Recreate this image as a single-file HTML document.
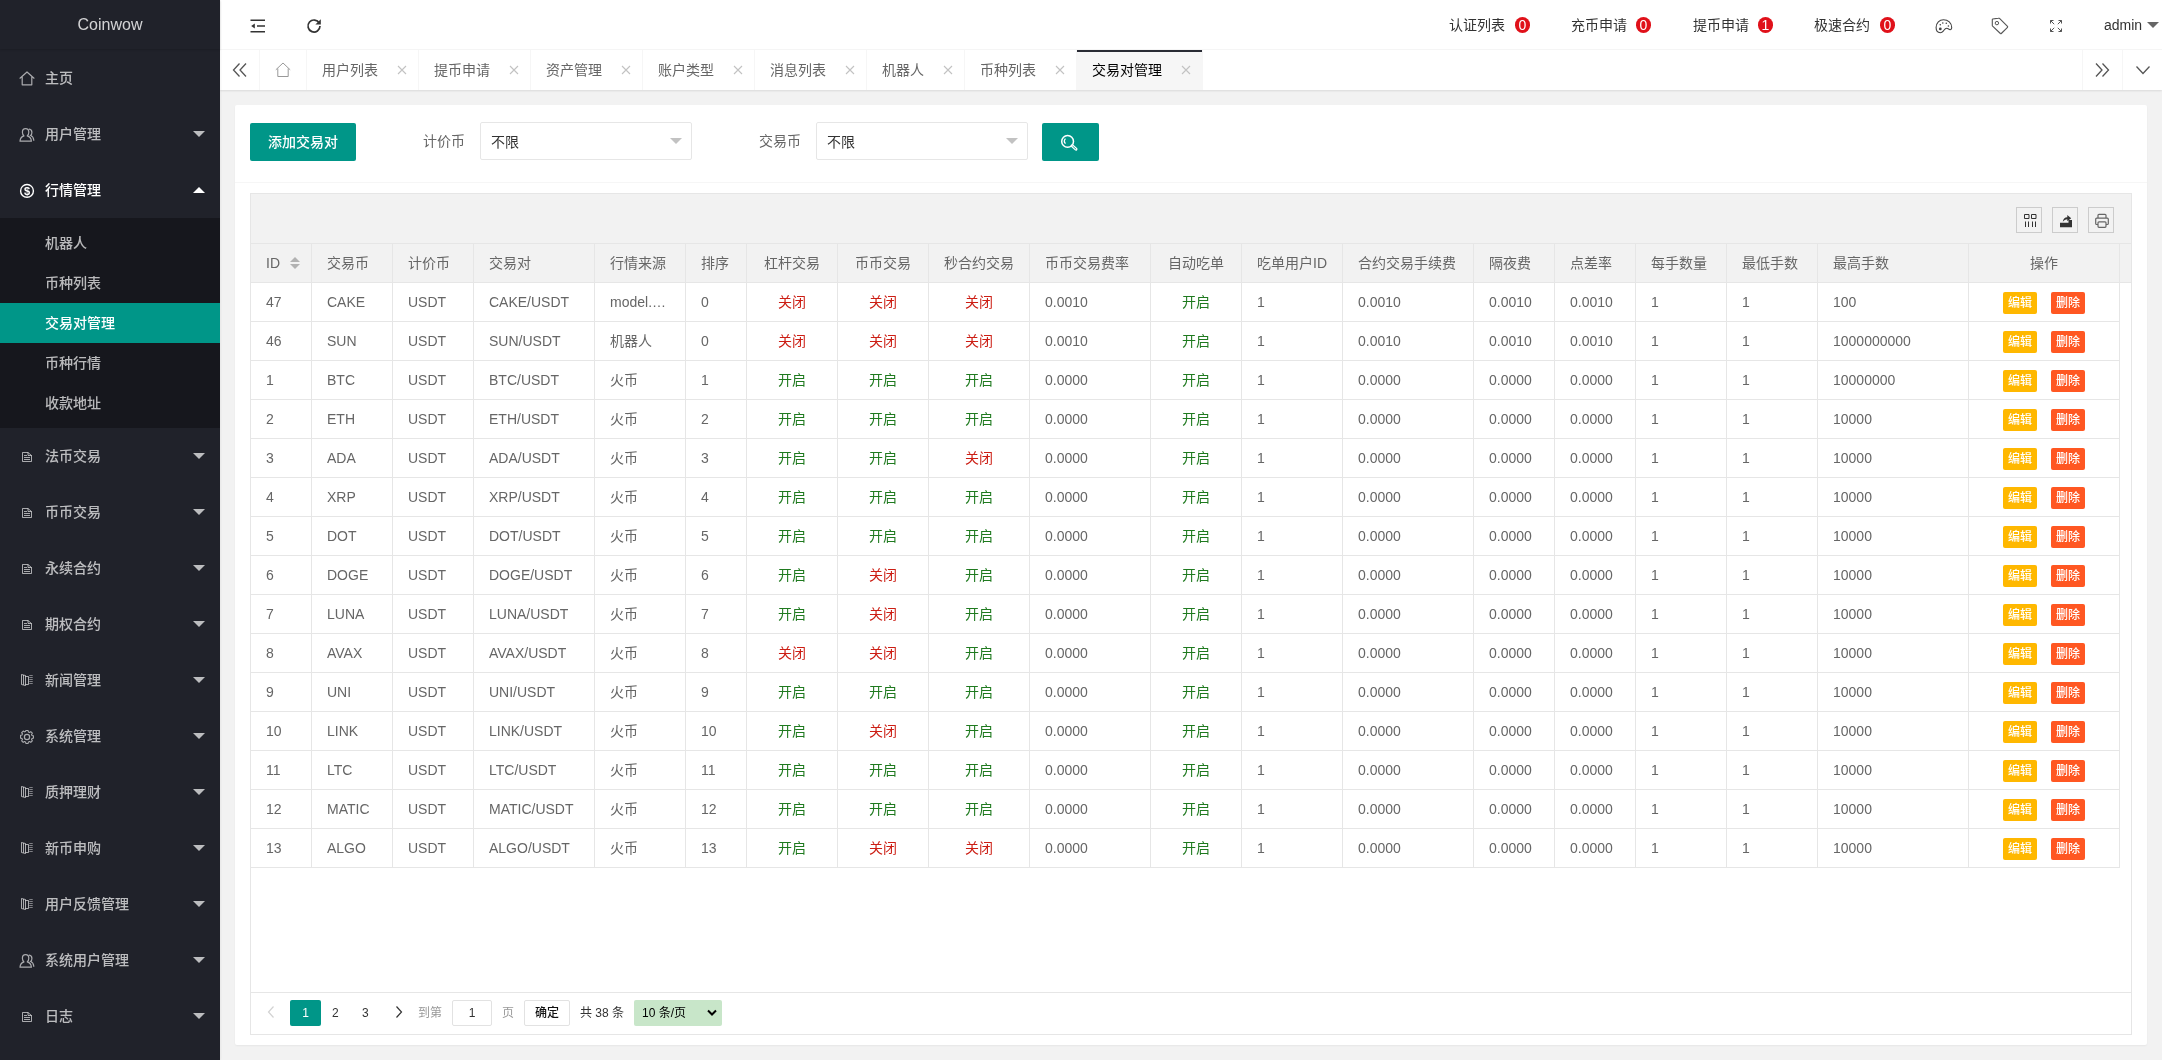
<!DOCTYPE html>
<html lang="zh-CN"><head><meta charset="utf-8"><title>Coinwow</title>
<style>
*{box-sizing:border-box;margin:0;padding:0}
html,body{width:2162px;height:1060px;overflow:hidden;background:#f2f2f2;
 font-family:"Liberation Sans", "Noto Sans CJK SC", sans-serif;font-size:14px;color:#666;line-height:24px}
a{text-decoration:none;color:inherit}
ul{list-style:none}
svg{display:block}
.abs{position:absolute}
/* sidebar */
#wrap{position:absolute;left:0;top:0;width:2162px;height:1060px;will-change:transform}
#side{position:absolute;left:0;top:0;width:220px;height:1060px;background:#20222A;z-index:5;box-shadow:1px 0 2px 0 rgba(0,0,0,.05)}
#logo{position:absolute;left:0;top:0;width:220px;height:49px;line-height:50px;text-align:center;color:rgba(255,255,255,.8);font-size:16px;box-shadow:0 1px 2px 0 rgba(0,0,0,.15)}
#nav{position:absolute;left:0;top:50px;width:220px}
#nav .it{position:relative;height:56px;line-height:56px;color:rgba(255,255,255,.7);padding-left:45px;font-size:14px;font-weight:500}
#nav .it.on{color:#fff}
#nav .it .ic{position:absolute;left:22px;top:24px;color:rgba(255,255,255,.62)}
#nav .it .more{position:absolute;right:15px;top:25px;width:0;height:0;border:6px solid transparent;border-top-color:rgba(255,255,255,.7)}
#nav .it.on .more{top:19px;border-top-color:transparent;border-bottom-color:#fff}
#nav .child{background:rgba(0,0,0,.3);padding:5px 0}
#nav .child div{height:40px;line-height:40px;padding-left:45px;color:rgba(255,255,255,.7);font-weight:500}
#nav .child div.this{background:#009688;color:#fff}
/* header */
#header{position:absolute;left:220px;top:0;width:1942px;height:50px;background:#fff;border-bottom:1px solid #f6f6f6;color:#333}
#header .t{position:absolute;top:0;height:50px;line-height:50px;color:#333;white-space:nowrap}
.badge{position:absolute;top:17px;width:15px;height:16px;border-radius:8px;background:#e0111a;color:#fff;font-size:14px;line-height:16px;text-align:center}
/* tabs */
#tabs{position:absolute;left:220px;top:50px;width:1942px;height:40px;background:#fff;box-shadow:0 1px 2px 0 rgba(0,0,0,.1)}
#tabs .tab{position:absolute;top:0;height:40px;line-height:40px;padding-left:15px;border-right:1px solid #f6f6f6;color:#666;white-space:nowrap}
#tabs .tab.this{background:#f6f6f6;color:#000}
#tabs .tab.this:after{content:"";position:absolute;left:0;top:0;width:100%;height:2px;background:#292B34}
#tabs .tab .x{position:absolute;right:10px;top:14px;width:12px;height:12px}
#tabs .ctl{position:absolute;top:0;width:40px;height:40px}
/* card */
#card{position:absolute;left:235px;top:105px;width:1912px;height:940px;background:#fff;border-radius:2px;box-shadow:0 1px 2px 0 rgba(0,0,0,.05)}
.btn{position:absolute;height:38px;line-height:38px;background:#009688;color:#fff;font-weight:500;border-radius:2px;text-align:center;font-size:14px;white-space:nowrap}
.lbl{position:absolute;height:38px;line-height:38px;color:#666;white-space:nowrap}
.sel{position:absolute;height:38px;border:1px solid #e6e6e6;border-radius:2px;background:#fff;line-height:38px;padding-left:10px;color:#333}
.sel:after{content:"";position:absolute;right:9px;top:15px;border:6px solid transparent;border-top-color:#c2c2c2}
/* table */
#tv{position:absolute;left:250px;top:193px;width:1882px;height:842px;border:1px solid #e6e6e6;background:#fff}
#tool{position:absolute;left:0;top:0;width:1880px;height:50px;background:#f2f2f2;border-bottom:1px solid #e6e6e6}
#tool .tb{position:absolute;top:13px;width:26px;height:26px;border:1px solid #ccc;background:transparent}
#thead{position:absolute;left:0;top:50px;width:1880px;height:39px;background:#f2f2f2;border-bottom:1px solid #e6e6e6}
.c{position:absolute;top:0;height:38px;line-height:38px;padding:0 15px;border-right:1px solid #e6e6e6;white-space:nowrap;overflow:hidden;color:#666}
.c.ctr{text-align:center}
.row{position:absolute;left:0;width:1869px;height:39px;border-bottom:1px solid #e6e6e6;background:#fff}
.g{color:#1f7a1f}
.r{color:#cc1e14}
.ob{position:absolute;top:9px;height:22px;line-height:22px;width:34px;border-radius:2px;color:#fff;font-size:12px;font-weight:500;text-align:center}
.ob.e{background:#FFB800}
.ob.d{background:#FF5722}
#page{position:absolute;left:0;top:798px;width:1880px;height:42px;border-top:1px solid #e6e6e6;background:#fff}
#page .p{position:absolute;top:7px;height:26px;line-height:26px;font-size:12px;color:#333;white-space:nowrap}
</style></head><body><div id="wrap">
<div id="side"><div id="logo">Coinwow</div><div id="nav"><div class="it"><span class="ic" style="left:19px;top:21px"><svg width="16" height="15" viewBox="0 0 16 15" style=""><path d="M1 7.200 L8 1 L15 7.200 M3.200 6 V13.800 H12.800 V6" fill="none" stroke="currentColor" stroke-width="1.200" stroke-linejoin="round" stroke-linecap="round"/></svg></span>主页</div><div class="it"><span class="ic" style="left:19px;top:21px"><svg width="16" height="16" viewBox="0 0 16 16" style=""><path d="M6.600 1.600c2 0 3.200 1.600 3.200 3.600 0 1.600-.6 2.900-1.600 3.700 2.400.7 4 2.500 4.200 5.300H1c.2-2.800 1.700-4.600 4-5.300C4 8.100 3.400 6.800 3.400 5.200c0-2 1.200-3.600 3.200-3.600z" fill="none" stroke="currentColor" stroke-width="1.200" stroke-linejoin="round"/><path d="M10.300 2.100c1.600.2 2.600 1.600 2.600 3.300 0 1.400-.5 2.400-1.300 3.100 1.800.7 3 2.400 3.200 4.800" fill="none" stroke="currentColor" stroke-width="1.200" stroke-linecap="round"/></svg></span>用户管理<i class="more"></i></div><div class="it on"><span class="ic" style="left:19px;top:21px;color:#fff"><svg width="16" height="16" viewBox="0 0 16 16" style=""><circle cx="8" cy="7.900" r="6.400" fill="none" stroke="currentColor" stroke-width="1.400"/><text x="8" y="11.700" font-size="11" font-weight="bold" text-anchor="middle" fill="currentColor" font-family="Liberation Sans, sans-serif">$</text></svg></span>行情管理<i class="more"></i></div><div class="child"><div>机器人</div><div>币种列表</div><div class="this">交易对管理</div><div>币种行情</div><div>收款地址</div></div><div class="it"><span class="ic" style=""><svg width="10" height="10" viewBox="0 0 10 10" style=""><path d="M0.500 0.500H6L9.500 3.500V9.500H0.500Z" fill="none" stroke="currentColor" stroke-width="1"/><path d="M6 0.500V3.500H9.500" fill="none" stroke="currentColor" stroke-width="1"/><path d="M2 3.500H5M2 5.500H8M2 7.500H8" stroke="currentColor" stroke-width="1"/></svg></span>法币交易<i class="more"></i></div><div class="it"><span class="ic" style=""><svg width="10" height="10" viewBox="0 0 10 10" style=""><path d="M0.500 0.500H6L9.500 3.500V9.500H0.500Z" fill="none" stroke="currentColor" stroke-width="1"/><path d="M6 0.500V3.500H9.500" fill="none" stroke="currentColor" stroke-width="1"/><path d="M2 3.500H5M2 5.500H8M2 7.500H8" stroke="currentColor" stroke-width="1"/></svg></span>币币交易<i class="more"></i></div><div class="it"><span class="ic" style=""><svg width="10" height="10" viewBox="0 0 10 10" style=""><path d="M0.500 0.500H6L9.500 3.500V9.500H0.500Z" fill="none" stroke="currentColor" stroke-width="1"/><path d="M6 0.500V3.500H9.500" fill="none" stroke="currentColor" stroke-width="1"/><path d="M2 3.500H5M2 5.500H8M2 7.500H8" stroke="currentColor" stroke-width="1"/></svg></span>永续合约<i class="more"></i></div><div class="it"><span class="ic" style=""><svg width="10" height="10" viewBox="0 0 10 10" style=""><path d="M0.500 0.500H6L9.500 3.500V9.500H0.500Z" fill="none" stroke="currentColor" stroke-width="1"/><path d="M6 0.500V3.500H9.500" fill="none" stroke="currentColor" stroke-width="1"/><path d="M2 3.500H5M2 5.500H8M2 7.500H8" stroke="currentColor" stroke-width="1"/></svg></span>期权合约<i class="more"></i></div><div class="it"><span class="ic" style="left:21px;top:22px"><svg width="12" height="12" viewBox="0 0 12 12" style=""><path d="M0.500 0.500L4.500 1.500V11.500L0.500 10.500Z" fill="none" stroke="currentColor" stroke-width="1"/><path d="M2.500 1V10.800" stroke="currentColor" stroke-width="1"/><path d="M4.500 2.500H7.500V10.500H4.500" fill="none" stroke="currentColor" stroke-width="1"/><path d="M8.500 1.500H11.500M8.500 3.500H11.500M8.500 5.500H11.500M8.500 7.500H11.500M8.500 9.500H11.500" stroke="currentColor" stroke-width="1" stroke-dasharray="1.200 .6"/></svg></span>新闻管理<i class="more"></i></div><div class="it"><span class="ic" style="left:19px;top:21px"><svg width="16" height="16" viewBox="0 0 16 16" style=""><circle cx="8" cy="8" r="2.600" fill="none" stroke="currentColor" stroke-width="1.200"/><path d="M6.700 1.200h2.600l.4 1.700 1.200.5 1.500-.9 1.800 1.800-.9 1.500.5 1.200 1.700.4v2.600l-1.700.4-.5 1.200.9 1.500-1.800 1.800-1.500-.9-1.200.5-.4 1.700H6.700l-.4-1.700-1.200-.5-1.500.9-1.800-1.800.9-1.500-.5-1.200-1.700-.4V6.700l1.700-.4.5-1.200-.9-1.500 1.800-1.800 1.500.9 1.200-.5z" transform="translate(8 8) scale(.86) translate(-8 -8.700)" fill="none" stroke="currentColor" stroke-width="1.300" stroke-linejoin="round"/></svg></span>系统管理<i class="more"></i></div><div class="it"><span class="ic" style="left:21px;top:22px"><svg width="12" height="12" viewBox="0 0 12 12" style=""><path d="M0.500 0.500L4.500 1.500V11.500L0.500 10.500Z" fill="none" stroke="currentColor" stroke-width="1"/><path d="M2.500 1V10.800" stroke="currentColor" stroke-width="1"/><path d="M4.500 2.500H7.500V10.500H4.500" fill="none" stroke="currentColor" stroke-width="1"/><path d="M8.500 1.500H11.500M8.500 3.500H11.500M8.500 5.500H11.500M8.500 7.500H11.500M8.500 9.500H11.500" stroke="currentColor" stroke-width="1" stroke-dasharray="1.200 .6"/></svg></span>质押理财<i class="more"></i></div><div class="it"><span class="ic" style="left:21px;top:22px"><svg width="12" height="12" viewBox="0 0 12 12" style=""><path d="M0.500 0.500L4.500 1.500V11.500L0.500 10.500Z" fill="none" stroke="currentColor" stroke-width="1"/><path d="M2.500 1V10.800" stroke="currentColor" stroke-width="1"/><path d="M4.500 2.500H7.500V10.500H4.500" fill="none" stroke="currentColor" stroke-width="1"/><path d="M8.500 1.500H11.500M8.500 3.500H11.500M8.500 5.500H11.500M8.500 7.500H11.500M8.500 9.500H11.500" stroke="currentColor" stroke-width="1" stroke-dasharray="1.200 .6"/></svg></span>新币申购<i class="more"></i></div><div class="it"><span class="ic" style="left:21px;top:22px"><svg width="12" height="12" viewBox="0 0 12 12" style=""><path d="M0.500 0.500L4.500 1.500V11.500L0.500 10.500Z" fill="none" stroke="currentColor" stroke-width="1"/><path d="M2.500 1V10.800" stroke="currentColor" stroke-width="1"/><path d="M4.500 2.500H7.500V10.500H4.500" fill="none" stroke="currentColor" stroke-width="1"/><path d="M8.500 1.500H11.500M8.500 3.500H11.500M8.500 5.500H11.500M8.500 7.500H11.500M8.500 9.500H11.500" stroke="currentColor" stroke-width="1" stroke-dasharray="1.200 .6"/></svg></span>用户反馈管理<i class="more"></i></div><div class="it"><span class="ic" style="left:19px;top:21px"><svg width="16" height="16" viewBox="0 0 16 16" style=""><path d="M6.600 1.600c2 0 3.200 1.600 3.200 3.600 0 1.600-.6 2.900-1.600 3.700 2.400.7 4 2.500 4.200 5.300H1c.2-2.800 1.700-4.600 4-5.300C4 8.100 3.400 6.800 3.400 5.200c0-2 1.200-3.600 3.200-3.600z" fill="none" stroke="currentColor" stroke-width="1.200" stroke-linejoin="round"/><path d="M10.300 2.100c1.600.2 2.600 1.600 2.600 3.300 0 1.400-.5 2.400-1.300 3.100 1.800.7 3 2.400 3.200 4.800" fill="none" stroke="currentColor" stroke-width="1.200" stroke-linecap="round"/></svg></span>系统用户管理<i class="more"></i></div><div class="it"><span class="ic" style=""><svg width="10" height="10" viewBox="0 0 10 10" style=""><path d="M0.500 0.500H6L9.500 3.500V9.500H0.500Z" fill="none" stroke="currentColor" stroke-width="1"/><path d="M6 0.500V3.500H9.500" fill="none" stroke="currentColor" stroke-width="1"/><path d="M2 3.500H5M2 5.500H8M2 7.500H8" stroke="currentColor" stroke-width="1"/></svg></span>日志<i class="more"></i></div></div></div>
<div id="header"><span class="abs" style="left:30px;top:18px;color:#333"><svg width="16" height="16" viewBox="0 0 16 16" style=""><path d="M0.500 2.200H15M7 8H15M0.500 13.800H15" stroke="currentColor" stroke-width="1.500" fill="none"/><path d="M1.200 8L4.800 5.600V10.400Z" fill="currentColor"/></svg></span><span class="abs" style="left:86px;top:18px;color:#333"><svg width="16" height="16" viewBox="0 0 16 16" style=""><path d="M13.300 5.200A6 6 0 1 0 14 8" fill="none" stroke="currentColor" stroke-width="1.700"/><path d="M14.800 1.200V6.600H9.400Z" fill="currentColor"/></svg></span><span class="t" style="left:1229px">认证列表</span><span class="badge" style="left:1295px">0</span><span class="t" style="left:1351px">充币申请</span><span class="badge" style="left:1416px">0</span><span class="t" style="left:1473px">提币申请</span><span class="badge" style="left:1538px">1</span><span class="t" style="left:1594px">极速合约</span><span class="badge" style="left:1660px">0</span><span class="abs" style="left:1715px;top:18px;color:#444"><svg width="18" height="16" viewBox="0 0 18 16" style=""><path d="M1.100 9.600C1.100 4.600 4.500 1.700 8.500 1.700C13 1.700 16.700 5 16.700 9.600C16.700 11 16 11.800 15 11.700C14 11.600 13 10.300 11.700 10.300C10 10.300 9.300 11.800 8.500 12.800C7.600 13.900 6.600 14.700 5.300 14.700C3 14.700 1.100 12.800 1.100 9.600Z" fill="none" stroke="currentColor" stroke-width="1.100"/><circle cx="5.300" cy="10.900" r="1.400" fill="currentColor"/><circle cx="5.300" cy="6.800" r=".8" fill="currentColor"/><circle cx="7.800" cy="5" r=".8" fill="currentColor"/><circle cx="11.300" cy="5.200" r=".8" fill="currentColor"/><circle cx="13.400" cy="8" r=".8" fill="currentColor"/></svg></span><span class="abs" style="left:1771px;top:17px;color:#555"><svg width="18" height="18" viewBox="0 0 18 18" style=""><path d="M1.300 2.600Q1.300 2.100 1.900 2L7.600 1.100Q8.100 1 8.500 1.400L16.500 9.400Q16.900 9.900 16.500 10.300L10.300 16.500Q9.850 16.900 9.400 16.500L1.600 9.200Q1.300 8.900 1.300 8.500Z" fill="none" stroke="currentColor" stroke-width="1.100" stroke-linejoin="round"/><circle cx="5.900" cy="6.100" r="1.700" fill="none" stroke="currentColor" stroke-width="1"/></svg></span><span class="abs" style="left:1830px;top:20px;color:#555"><svg width="12" height="12" viewBox="0 0 12 12" style=""><path d="M0.500 3.500V0.500H3.500M0.500 0.500L4.200 4.200M8.500 0.500H11.500V3.500M11.500 0.500L7.800 4.200M11.500 8.500V11.500H8.500M11.500 11.500L7.800 7.800M3.500 11.500H0.500V8.500M0.500 11.500L4.200 7.800" fill="none" stroke="currentColor" stroke-width="1"/></svg></span><span class="t" style="left:1884px">admin</span><i class="abs" style="left:1927px;top:22px;border:6px solid transparent;border-top-color:#666"></i></div>
<div id="tabs"><span class="ctl" style="left:0;border-right:1px solid #f6f6f6"><span class="abs" style="left:12px;top:12px;color:#555"><svg width="16" height="16" viewBox="0 0 16 16" style=""><path d="M7.500 1.500L1.500 8L7.500 14.500M14 1.500L8 8L14 14.500" fill="none" stroke="currentColor" stroke-width="1.300"/></svg></span></span><span class="tab" style="left:40px;width:47px"><span class="abs" style="left:15px;top:12px;color:#999"><svg width="16" height="16" viewBox="0 0 16 16" style=""><path d="M0.800 7.800L8 1L15.200 7.800M2.800 6.500V14.500H13.200V6.500" fill="none" stroke="currentColor" stroke-width="1" stroke-linejoin="round"/></svg></span></span><span class="tab" style="left:87px;width:112px">用户列表<span class="x"><svg width="12" height="12" viewBox="0 0 12 12" style=""><path d="M2 2L10 10M10 2L2 10" stroke="#c2c2c2" stroke-width="1.100"/></svg></span></span><span class="tab" style="left:199px;width:112px">提币申请<span class="x"><svg width="12" height="12" viewBox="0 0 12 12" style=""><path d="M2 2L10 10M10 2L2 10" stroke="#c2c2c2" stroke-width="1.100"/></svg></span></span><span class="tab" style="left:311px;width:112px">资产管理<span class="x"><svg width="12" height="12" viewBox="0 0 12 12" style=""><path d="M2 2L10 10M10 2L2 10" stroke="#c2c2c2" stroke-width="1.100"/></svg></span></span><span class="tab" style="left:423px;width:112px">账户类型<span class="x"><svg width="12" height="12" viewBox="0 0 12 12" style=""><path d="M2 2L10 10M10 2L2 10" stroke="#c2c2c2" stroke-width="1.100"/></svg></span></span><span class="tab" style="left:535px;width:112px">消息列表<span class="x"><svg width="12" height="12" viewBox="0 0 12 12" style=""><path d="M2 2L10 10M10 2L2 10" stroke="#c2c2c2" stroke-width="1.100"/></svg></span></span><span class="tab" style="left:647px;width:98px">机器人<span class="x"><svg width="12" height="12" viewBox="0 0 12 12" style=""><path d="M2 2L10 10M10 2L2 10" stroke="#c2c2c2" stroke-width="1.100"/></svg></span></span><span class="tab" style="left:745px;width:112px">币种列表<span class="x"><svg width="12" height="12" viewBox="0 0 12 12" style=""><path d="M2 2L10 10M10 2L2 10" stroke="#c2c2c2" stroke-width="1.100"/></svg></span></span><span class="tab this" style="left:857px;width:126px">交易对管理<span class="x"><svg width="12" height="12" viewBox="0 0 12 12" style=""><path d="M2 2L10 10M10 2L2 10" stroke="#c2c2c2" stroke-width="1.100"/></svg></span></span><span class="ctl" style="left:1862px;border-left:1px solid #f6f6f6"><span class="abs" style="left:11px;top:12px;color:#555"><svg width="16" height="16" viewBox="0 0 16 16" style=""><path d="M2 1.500L8 8L2 14.500M8.500 1.500L14.500 8L8.500 14.500" fill="none" stroke="currentColor" stroke-width="1.300"/></svg></span></span><span class="ctl" style="left:1902px;border-left:1px solid #f6f6f6"><span class="abs" style="left:12px;top:12px;color:#555"><svg width="16" height="16" viewBox="0 0 16 16" style=""><path d="M1.500 4.500L8 11.500L14.500 4.500" fill="none" stroke="currentColor" stroke-width="1.300"/></svg></span></span></div>
<div id="card"></div>
<a class="btn" style="left:250px;top:123px;width:106px">添加交易对</a><span class="lbl" style="left:423px;top:122px">计价币</span><div class="sel" style="left:480px;top:122px;width:212px">不限</div><span class="lbl" style="left:759px;top:122px">交易币</span><div class="sel" style="left:816px;top:122px;width:212px">不限</div><a class="btn" style="left:1042px;top:123px;width:57px"><span class="abs" style="left:16px;top:9px"><svg width="22" height="22" viewBox="0 0 22 22" style=""><circle cx="9.600" cy="9.400" r="5.900" fill="none" stroke="#fff" stroke-width="1.500"/><path d="M14.300 13.800L18 17.200" stroke="#fff" stroke-width="3" stroke-linecap="round"/><path d="M14.800 14.300L17.800 17" stroke="#009688" stroke-width=".9" stroke-linecap="round"/><path d="M7.500 6.600A3.600 3.600 0 0 0 7.500 11.600" fill="none" stroke="#fff" stroke-width="1.300"/></svg></span></a>
<div class="abs" style="left:235px;top:182px;width:1912px;height:1px;background:#f6f6f6"></div>
<div id="tv"><div id="tool"><span class="tb" style="left:1765px"><span class="abs" style="left:6px;top:5px"><svg width="14" height="14" viewBox="0 0 14 14" style=""><path d="M1.500 1.500H6V5.500H1.500ZM8.500 1.500H13V5.500H8.500Z" fill="none" stroke="#333" stroke-width="1"/><path d="M2.500 8.500V14M5.500 8.500V14M9.500 8.500V14M12.500 8.500V14" stroke="#333" stroke-width="1"/></svg></span></span><span class="tb" style="left:1801px"><span class="abs" style="left:6px;top:6px"><svg width="14" height="14" viewBox="0 0 14 14" style=""><path d="M1 8.800H9.500V6H13V13.200H1Z" fill="#333"/><path d="M3.800 7.800C4 5 5.800 3.300 8.300 3.200V1L12.200 4.200L8.300 7.200V5.200C6.500 5.200 5 6 3.800 7.800Z" fill="#333"/></svg></span></span><span class="tb" style="left:1837px"><span class="abs" style="left:5px;top:5px"><svg width="16" height="16" viewBox="0 0 16 16" style=""><path d="M4 5V2.300a1 1 0 0 1 1-1H11a1 1 0 0 1 1 1V5" fill="none" stroke="#666" stroke-width="1.200"/><path d="M4 11.500H2.700a1 1 0 0 1-1-1V6.200a1 1 0 0 1 1-1H13.300a1 1 0 0 1 1 1V10.500a1 1 0 0 1-1 1H12" fill="none" stroke="#666" stroke-width="1.200"/><rect x="4" y="8.800" width="8" height="5.500" rx="1" fill="none" stroke="#666" stroke-width="1.200"/></svg></span></span></div><div id="thead"><div class="c" style="left:0px;width:61px">ID<span class="abs" style="left:39px;top:13px"><i class="abs" style="left:0;top:-5px;border:5px solid transparent;border-bottom-color:#b2b2b2"></i><i class="abs" style="left:0;top:7px;border:5px solid transparent;border-top-color:#b2b2b2"></i></span></div><div class="c" style="left:61px;width:81px">交易币</div><div class="c" style="left:142px;width:81px">计价币</div><div class="c" style="left:223px;width:121px">交易对</div><div class="c" style="left:344px;width:91px">行情来源</div><div class="c" style="left:435px;width:61px">排序</div><div class="c ctr" style="left:496px;width:91px">杠杆交易</div><div class="c ctr" style="left:587px;width:91px">币币交易</div><div class="c ctr" style="left:678px;width:101px">秒合约交易</div><div class="c" style="left:779px;width:121px">币币交易费率</div><div class="c ctr" style="left:900px;width:91px">自动吃单</div><div class="c" style="left:991px;width:101px">吃单用户ID</div><div class="c" style="left:1092px;width:131px">合约交易手续费</div><div class="c" style="left:1223px;width:81px">隔夜费</div><div class="c" style="left:1304px;width:81px">点差率</div><div class="c" style="left:1385px;width:91px">每手数量</div><div class="c" style="left:1476px;width:91px">最低手数</div><div class="c" style="left:1567px;width:151px">最高手数</div><div class="c ctr" style="left:1718px;width:151px">操作</div></div><div class="row" style="top:89px"><div class="c" style="left:0px;width:61px">47</div><div class="c" style="left:61px;width:81px">CAKE</div><div class="c" style="left:142px;width:81px">USDT</div><div class="c" style="left:223px;width:121px">CAKE/USDT</div><div class="c" style="left:344px;width:91px">model.…</div><div class="c" style="left:435px;width:61px">0</div><div class="c ctr" style="left:496px;width:91px"><span class="r">关闭</span></div><div class="c ctr" style="left:587px;width:91px"><span class="r">关闭</span></div><div class="c ctr" style="left:678px;width:101px"><span class="r">关闭</span></div><div class="c" style="left:779px;width:121px">0.0010</div><div class="c ctr" style="left:900px;width:91px"><span class="g">开启</span></div><div class="c" style="left:991px;width:101px">1</div><div class="c" style="left:1092px;width:131px">0.0010</div><div class="c" style="left:1223px;width:81px">0.0010</div><div class="c" style="left:1304px;width:81px">0.0010</div><div class="c" style="left:1385px;width:91px">1</div><div class="c" style="left:1476px;width:91px">1</div><div class="c" style="left:1567px;width:151px">100</div><div class="c ctr" style="left:1718px;width:151px"><a class="ob e" style="left:34px">编辑</a><a class="ob d" style="left:82px">删除</a></div></div>
<div class="row" style="top:128px"><div class="c" style="left:0px;width:61px">46</div><div class="c" style="left:61px;width:81px">SUN</div><div class="c" style="left:142px;width:81px">USDT</div><div class="c" style="left:223px;width:121px">SUN/USDT</div><div class="c" style="left:344px;width:91px">机器人</div><div class="c" style="left:435px;width:61px">0</div><div class="c ctr" style="left:496px;width:91px"><span class="r">关闭</span></div><div class="c ctr" style="left:587px;width:91px"><span class="r">关闭</span></div><div class="c ctr" style="left:678px;width:101px"><span class="r">关闭</span></div><div class="c" style="left:779px;width:121px">0.0010</div><div class="c ctr" style="left:900px;width:91px"><span class="g">开启</span></div><div class="c" style="left:991px;width:101px">1</div><div class="c" style="left:1092px;width:131px">0.0010</div><div class="c" style="left:1223px;width:81px">0.0010</div><div class="c" style="left:1304px;width:81px">0.0010</div><div class="c" style="left:1385px;width:91px">1</div><div class="c" style="left:1476px;width:91px">1</div><div class="c" style="left:1567px;width:151px">1000000000</div><div class="c ctr" style="left:1718px;width:151px"><a class="ob e" style="left:34px">编辑</a><a class="ob d" style="left:82px">删除</a></div></div>
<div class="row" style="top:167px"><div class="c" style="left:0px;width:61px">1</div><div class="c" style="left:61px;width:81px">BTC</div><div class="c" style="left:142px;width:81px">USDT</div><div class="c" style="left:223px;width:121px">BTC/USDT</div><div class="c" style="left:344px;width:91px">火币</div><div class="c" style="left:435px;width:61px">1</div><div class="c ctr" style="left:496px;width:91px"><span class="g">开启</span></div><div class="c ctr" style="left:587px;width:91px"><span class="g">开启</span></div><div class="c ctr" style="left:678px;width:101px"><span class="g">开启</span></div><div class="c" style="left:779px;width:121px">0.0000</div><div class="c ctr" style="left:900px;width:91px"><span class="g">开启</span></div><div class="c" style="left:991px;width:101px">1</div><div class="c" style="left:1092px;width:131px">0.0000</div><div class="c" style="left:1223px;width:81px">0.0000</div><div class="c" style="left:1304px;width:81px">0.0000</div><div class="c" style="left:1385px;width:91px">1</div><div class="c" style="left:1476px;width:91px">1</div><div class="c" style="left:1567px;width:151px">10000000</div><div class="c ctr" style="left:1718px;width:151px"><a class="ob e" style="left:34px">编辑</a><a class="ob d" style="left:82px">删除</a></div></div>
<div class="row" style="top:206px"><div class="c" style="left:0px;width:61px">2</div><div class="c" style="left:61px;width:81px">ETH</div><div class="c" style="left:142px;width:81px">USDT</div><div class="c" style="left:223px;width:121px">ETH/USDT</div><div class="c" style="left:344px;width:91px">火币</div><div class="c" style="left:435px;width:61px">2</div><div class="c ctr" style="left:496px;width:91px"><span class="g">开启</span></div><div class="c ctr" style="left:587px;width:91px"><span class="g">开启</span></div><div class="c ctr" style="left:678px;width:101px"><span class="g">开启</span></div><div class="c" style="left:779px;width:121px">0.0000</div><div class="c ctr" style="left:900px;width:91px"><span class="g">开启</span></div><div class="c" style="left:991px;width:101px">1</div><div class="c" style="left:1092px;width:131px">0.0000</div><div class="c" style="left:1223px;width:81px">0.0000</div><div class="c" style="left:1304px;width:81px">0.0000</div><div class="c" style="left:1385px;width:91px">1</div><div class="c" style="left:1476px;width:91px">1</div><div class="c" style="left:1567px;width:151px">10000</div><div class="c ctr" style="left:1718px;width:151px"><a class="ob e" style="left:34px">编辑</a><a class="ob d" style="left:82px">删除</a></div></div>
<div class="row" style="top:245px"><div class="c" style="left:0px;width:61px">3</div><div class="c" style="left:61px;width:81px">ADA</div><div class="c" style="left:142px;width:81px">USDT</div><div class="c" style="left:223px;width:121px">ADA/USDT</div><div class="c" style="left:344px;width:91px">火币</div><div class="c" style="left:435px;width:61px">3</div><div class="c ctr" style="left:496px;width:91px"><span class="g">开启</span></div><div class="c ctr" style="left:587px;width:91px"><span class="g">开启</span></div><div class="c ctr" style="left:678px;width:101px"><span class="r">关闭</span></div><div class="c" style="left:779px;width:121px">0.0000</div><div class="c ctr" style="left:900px;width:91px"><span class="g">开启</span></div><div class="c" style="left:991px;width:101px">1</div><div class="c" style="left:1092px;width:131px">0.0000</div><div class="c" style="left:1223px;width:81px">0.0000</div><div class="c" style="left:1304px;width:81px">0.0000</div><div class="c" style="left:1385px;width:91px">1</div><div class="c" style="left:1476px;width:91px">1</div><div class="c" style="left:1567px;width:151px">10000</div><div class="c ctr" style="left:1718px;width:151px"><a class="ob e" style="left:34px">编辑</a><a class="ob d" style="left:82px">删除</a></div></div>
<div class="row" style="top:284px"><div class="c" style="left:0px;width:61px">4</div><div class="c" style="left:61px;width:81px">XRP</div><div class="c" style="left:142px;width:81px">USDT</div><div class="c" style="left:223px;width:121px">XRP/USDT</div><div class="c" style="left:344px;width:91px">火币</div><div class="c" style="left:435px;width:61px">4</div><div class="c ctr" style="left:496px;width:91px"><span class="g">开启</span></div><div class="c ctr" style="left:587px;width:91px"><span class="g">开启</span></div><div class="c ctr" style="left:678px;width:101px"><span class="g">开启</span></div><div class="c" style="left:779px;width:121px">0.0000</div><div class="c ctr" style="left:900px;width:91px"><span class="g">开启</span></div><div class="c" style="left:991px;width:101px">1</div><div class="c" style="left:1092px;width:131px">0.0000</div><div class="c" style="left:1223px;width:81px">0.0000</div><div class="c" style="left:1304px;width:81px">0.0000</div><div class="c" style="left:1385px;width:91px">1</div><div class="c" style="left:1476px;width:91px">1</div><div class="c" style="left:1567px;width:151px">10000</div><div class="c ctr" style="left:1718px;width:151px"><a class="ob e" style="left:34px">编辑</a><a class="ob d" style="left:82px">删除</a></div></div>
<div class="row" style="top:323px"><div class="c" style="left:0px;width:61px">5</div><div class="c" style="left:61px;width:81px">DOT</div><div class="c" style="left:142px;width:81px">USDT</div><div class="c" style="left:223px;width:121px">DOT/USDT</div><div class="c" style="left:344px;width:91px">火币</div><div class="c" style="left:435px;width:61px">5</div><div class="c ctr" style="left:496px;width:91px"><span class="g">开启</span></div><div class="c ctr" style="left:587px;width:91px"><span class="g">开启</span></div><div class="c ctr" style="left:678px;width:101px"><span class="g">开启</span></div><div class="c" style="left:779px;width:121px">0.0000</div><div class="c ctr" style="left:900px;width:91px"><span class="g">开启</span></div><div class="c" style="left:991px;width:101px">1</div><div class="c" style="left:1092px;width:131px">0.0000</div><div class="c" style="left:1223px;width:81px">0.0000</div><div class="c" style="left:1304px;width:81px">0.0000</div><div class="c" style="left:1385px;width:91px">1</div><div class="c" style="left:1476px;width:91px">1</div><div class="c" style="left:1567px;width:151px">10000</div><div class="c ctr" style="left:1718px;width:151px"><a class="ob e" style="left:34px">编辑</a><a class="ob d" style="left:82px">删除</a></div></div>
<div class="row" style="top:362px"><div class="c" style="left:0px;width:61px">6</div><div class="c" style="left:61px;width:81px">DOGE</div><div class="c" style="left:142px;width:81px">USDT</div><div class="c" style="left:223px;width:121px">DOGE/USDT</div><div class="c" style="left:344px;width:91px">火币</div><div class="c" style="left:435px;width:61px">6</div><div class="c ctr" style="left:496px;width:91px"><span class="g">开启</span></div><div class="c ctr" style="left:587px;width:91px"><span class="r">关闭</span></div><div class="c ctr" style="left:678px;width:101px"><span class="g">开启</span></div><div class="c" style="left:779px;width:121px">0.0000</div><div class="c ctr" style="left:900px;width:91px"><span class="g">开启</span></div><div class="c" style="left:991px;width:101px">1</div><div class="c" style="left:1092px;width:131px">0.0000</div><div class="c" style="left:1223px;width:81px">0.0000</div><div class="c" style="left:1304px;width:81px">0.0000</div><div class="c" style="left:1385px;width:91px">1</div><div class="c" style="left:1476px;width:91px">1</div><div class="c" style="left:1567px;width:151px">10000</div><div class="c ctr" style="left:1718px;width:151px"><a class="ob e" style="left:34px">编辑</a><a class="ob d" style="left:82px">删除</a></div></div>
<div class="row" style="top:401px"><div class="c" style="left:0px;width:61px">7</div><div class="c" style="left:61px;width:81px">LUNA</div><div class="c" style="left:142px;width:81px">USDT</div><div class="c" style="left:223px;width:121px">LUNA/USDT</div><div class="c" style="left:344px;width:91px">火币</div><div class="c" style="left:435px;width:61px">7</div><div class="c ctr" style="left:496px;width:91px"><span class="g">开启</span></div><div class="c ctr" style="left:587px;width:91px"><span class="r">关闭</span></div><div class="c ctr" style="left:678px;width:101px"><span class="g">开启</span></div><div class="c" style="left:779px;width:121px">0.0000</div><div class="c ctr" style="left:900px;width:91px"><span class="g">开启</span></div><div class="c" style="left:991px;width:101px">1</div><div class="c" style="left:1092px;width:131px">0.0000</div><div class="c" style="left:1223px;width:81px">0.0000</div><div class="c" style="left:1304px;width:81px">0.0000</div><div class="c" style="left:1385px;width:91px">1</div><div class="c" style="left:1476px;width:91px">1</div><div class="c" style="left:1567px;width:151px">10000</div><div class="c ctr" style="left:1718px;width:151px"><a class="ob e" style="left:34px">编辑</a><a class="ob d" style="left:82px">删除</a></div></div>
<div class="row" style="top:440px"><div class="c" style="left:0px;width:61px">8</div><div class="c" style="left:61px;width:81px">AVAX</div><div class="c" style="left:142px;width:81px">USDT</div><div class="c" style="left:223px;width:121px">AVAX/USDT</div><div class="c" style="left:344px;width:91px">火币</div><div class="c" style="left:435px;width:61px">8</div><div class="c ctr" style="left:496px;width:91px"><span class="r">关闭</span></div><div class="c ctr" style="left:587px;width:91px"><span class="r">关闭</span></div><div class="c ctr" style="left:678px;width:101px"><span class="g">开启</span></div><div class="c" style="left:779px;width:121px">0.0000</div><div class="c ctr" style="left:900px;width:91px"><span class="g">开启</span></div><div class="c" style="left:991px;width:101px">1</div><div class="c" style="left:1092px;width:131px">0.0000</div><div class="c" style="left:1223px;width:81px">0.0000</div><div class="c" style="left:1304px;width:81px">0.0000</div><div class="c" style="left:1385px;width:91px">1</div><div class="c" style="left:1476px;width:91px">1</div><div class="c" style="left:1567px;width:151px">10000</div><div class="c ctr" style="left:1718px;width:151px"><a class="ob e" style="left:34px">编辑</a><a class="ob d" style="left:82px">删除</a></div></div>
<div class="row" style="top:479px"><div class="c" style="left:0px;width:61px">9</div><div class="c" style="left:61px;width:81px">UNI</div><div class="c" style="left:142px;width:81px">USDT</div><div class="c" style="left:223px;width:121px">UNI/USDT</div><div class="c" style="left:344px;width:91px">火币</div><div class="c" style="left:435px;width:61px">9</div><div class="c ctr" style="left:496px;width:91px"><span class="g">开启</span></div><div class="c ctr" style="left:587px;width:91px"><span class="g">开启</span></div><div class="c ctr" style="left:678px;width:101px"><span class="g">开启</span></div><div class="c" style="left:779px;width:121px">0.0000</div><div class="c ctr" style="left:900px;width:91px"><span class="g">开启</span></div><div class="c" style="left:991px;width:101px">1</div><div class="c" style="left:1092px;width:131px">0.0000</div><div class="c" style="left:1223px;width:81px">0.0000</div><div class="c" style="left:1304px;width:81px">0.0000</div><div class="c" style="left:1385px;width:91px">1</div><div class="c" style="left:1476px;width:91px">1</div><div class="c" style="left:1567px;width:151px">10000</div><div class="c ctr" style="left:1718px;width:151px"><a class="ob e" style="left:34px">编辑</a><a class="ob d" style="left:82px">删除</a></div></div>
<div class="row" style="top:518px"><div class="c" style="left:0px;width:61px">10</div><div class="c" style="left:61px;width:81px">LINK</div><div class="c" style="left:142px;width:81px">USDT</div><div class="c" style="left:223px;width:121px">LINK/USDT</div><div class="c" style="left:344px;width:91px">火币</div><div class="c" style="left:435px;width:61px">10</div><div class="c ctr" style="left:496px;width:91px"><span class="g">开启</span></div><div class="c ctr" style="left:587px;width:91px"><span class="r">关闭</span></div><div class="c ctr" style="left:678px;width:101px"><span class="g">开启</span></div><div class="c" style="left:779px;width:121px">0.0000</div><div class="c ctr" style="left:900px;width:91px"><span class="g">开启</span></div><div class="c" style="left:991px;width:101px">1</div><div class="c" style="left:1092px;width:131px">0.0000</div><div class="c" style="left:1223px;width:81px">0.0000</div><div class="c" style="left:1304px;width:81px">0.0000</div><div class="c" style="left:1385px;width:91px">1</div><div class="c" style="left:1476px;width:91px">1</div><div class="c" style="left:1567px;width:151px">10000</div><div class="c ctr" style="left:1718px;width:151px"><a class="ob e" style="left:34px">编辑</a><a class="ob d" style="left:82px">删除</a></div></div>
<div class="row" style="top:557px"><div class="c" style="left:0px;width:61px">11</div><div class="c" style="left:61px;width:81px">LTC</div><div class="c" style="left:142px;width:81px">USDT</div><div class="c" style="left:223px;width:121px">LTC/USDT</div><div class="c" style="left:344px;width:91px">火币</div><div class="c" style="left:435px;width:61px">11</div><div class="c ctr" style="left:496px;width:91px"><span class="g">开启</span></div><div class="c ctr" style="left:587px;width:91px"><span class="g">开启</span></div><div class="c ctr" style="left:678px;width:101px"><span class="g">开启</span></div><div class="c" style="left:779px;width:121px">0.0000</div><div class="c ctr" style="left:900px;width:91px"><span class="g">开启</span></div><div class="c" style="left:991px;width:101px">1</div><div class="c" style="left:1092px;width:131px">0.0000</div><div class="c" style="left:1223px;width:81px">0.0000</div><div class="c" style="left:1304px;width:81px">0.0000</div><div class="c" style="left:1385px;width:91px">1</div><div class="c" style="left:1476px;width:91px">1</div><div class="c" style="left:1567px;width:151px">10000</div><div class="c ctr" style="left:1718px;width:151px"><a class="ob e" style="left:34px">编辑</a><a class="ob d" style="left:82px">删除</a></div></div>
<div class="row" style="top:596px"><div class="c" style="left:0px;width:61px">12</div><div class="c" style="left:61px;width:81px">MATIC</div><div class="c" style="left:142px;width:81px">USDT</div><div class="c" style="left:223px;width:121px">MATIC/USDT</div><div class="c" style="left:344px;width:91px">火币</div><div class="c" style="left:435px;width:61px">12</div><div class="c ctr" style="left:496px;width:91px"><span class="g">开启</span></div><div class="c ctr" style="left:587px;width:91px"><span class="g">开启</span></div><div class="c ctr" style="left:678px;width:101px"><span class="g">开启</span></div><div class="c" style="left:779px;width:121px">0.0000</div><div class="c ctr" style="left:900px;width:91px"><span class="g">开启</span></div><div class="c" style="left:991px;width:101px">1</div><div class="c" style="left:1092px;width:131px">0.0000</div><div class="c" style="left:1223px;width:81px">0.0000</div><div class="c" style="left:1304px;width:81px">0.0000</div><div class="c" style="left:1385px;width:91px">1</div><div class="c" style="left:1476px;width:91px">1</div><div class="c" style="left:1567px;width:151px">10000</div><div class="c ctr" style="left:1718px;width:151px"><a class="ob e" style="left:34px">编辑</a><a class="ob d" style="left:82px">删除</a></div></div>
<div class="row" style="top:635px"><div class="c" style="left:0px;width:61px">13</div><div class="c" style="left:61px;width:81px">ALGO</div><div class="c" style="left:142px;width:81px">USDT</div><div class="c" style="left:223px;width:121px">ALGO/USDT</div><div class="c" style="left:344px;width:91px">火币</div><div class="c" style="left:435px;width:61px">13</div><div class="c ctr" style="left:496px;width:91px"><span class="g">开启</span></div><div class="c ctr" style="left:587px;width:91px"><span class="r">关闭</span></div><div class="c ctr" style="left:678px;width:101px"><span class="r">关闭</span></div><div class="c" style="left:779px;width:121px">0.0000</div><div class="c ctr" style="left:900px;width:91px"><span class="g">开启</span></div><div class="c" style="left:991px;width:101px">1</div><div class="c" style="left:1092px;width:131px">0.0000</div><div class="c" style="left:1223px;width:81px">0.0000</div><div class="c" style="left:1304px;width:81px">0.0000</div><div class="c" style="left:1385px;width:91px">1</div><div class="c" style="left:1476px;width:91px">1</div><div class="c" style="left:1567px;width:151px">10000</div><div class="c ctr" style="left:1718px;width:151px"><a class="ob e" style="left:34px">编辑</a><a class="ob d" style="left:82px">删除</a></div></div>
<div id="page"><span class="p" style="left:16px;top:12px"><svg width="8" height="14" viewBox="0 0 8 14" style=""><path d="M6.500 1.500L1.500 7L6.500 12.500" fill="none" stroke="#d2d2d2" stroke-width="1.200"/></svg></span><span class="p" style="left:39px;width:31px;background:#009688;color:#fff;text-align:center;border-radius:2px">1</span><span class="p" style="left:81px">2</span><span class="p" style="left:111px">3</span><span class="p" style="left:144px;top:12px"><svg width="8" height="14" viewBox="0 0 8 14" style=""><path d="M1.500 1.500L6.500 7L1.500 12.500" fill="none" stroke="#333" stroke-width="1.200"/></svg></span><span class="p" style="left:167px;color:#999">到第</span><span class="p" style="left:201px;width:40px;border:1px solid #e2e2e2;border-radius:2px;text-align:center;line-height:24px">1</span><span class="p" style="left:251px;color:#999">页</span><span class="p" style="left:273px;width:46px;border:1px solid #e2e2e2;border-radius:2px;text-align:center;line-height:24px;color:#111;font-weight:500">确定</span><span class="p" style="left:329px">共 38 条</span><span class="p" style="left:383px;width:88px;background:#c8e6c9;border-radius:2px;padding-left:8px;color:#000">10 条/页<span class="abs" style="right:5px;top:9px"><svg width="10" height="8" viewBox="0 0 10 8" style=""><path d="M1 1.500L5 5.500L9 1.500" fill="none" stroke="#000" stroke-width="2"/></svg></span></span></div></div>
</div></body></html>
